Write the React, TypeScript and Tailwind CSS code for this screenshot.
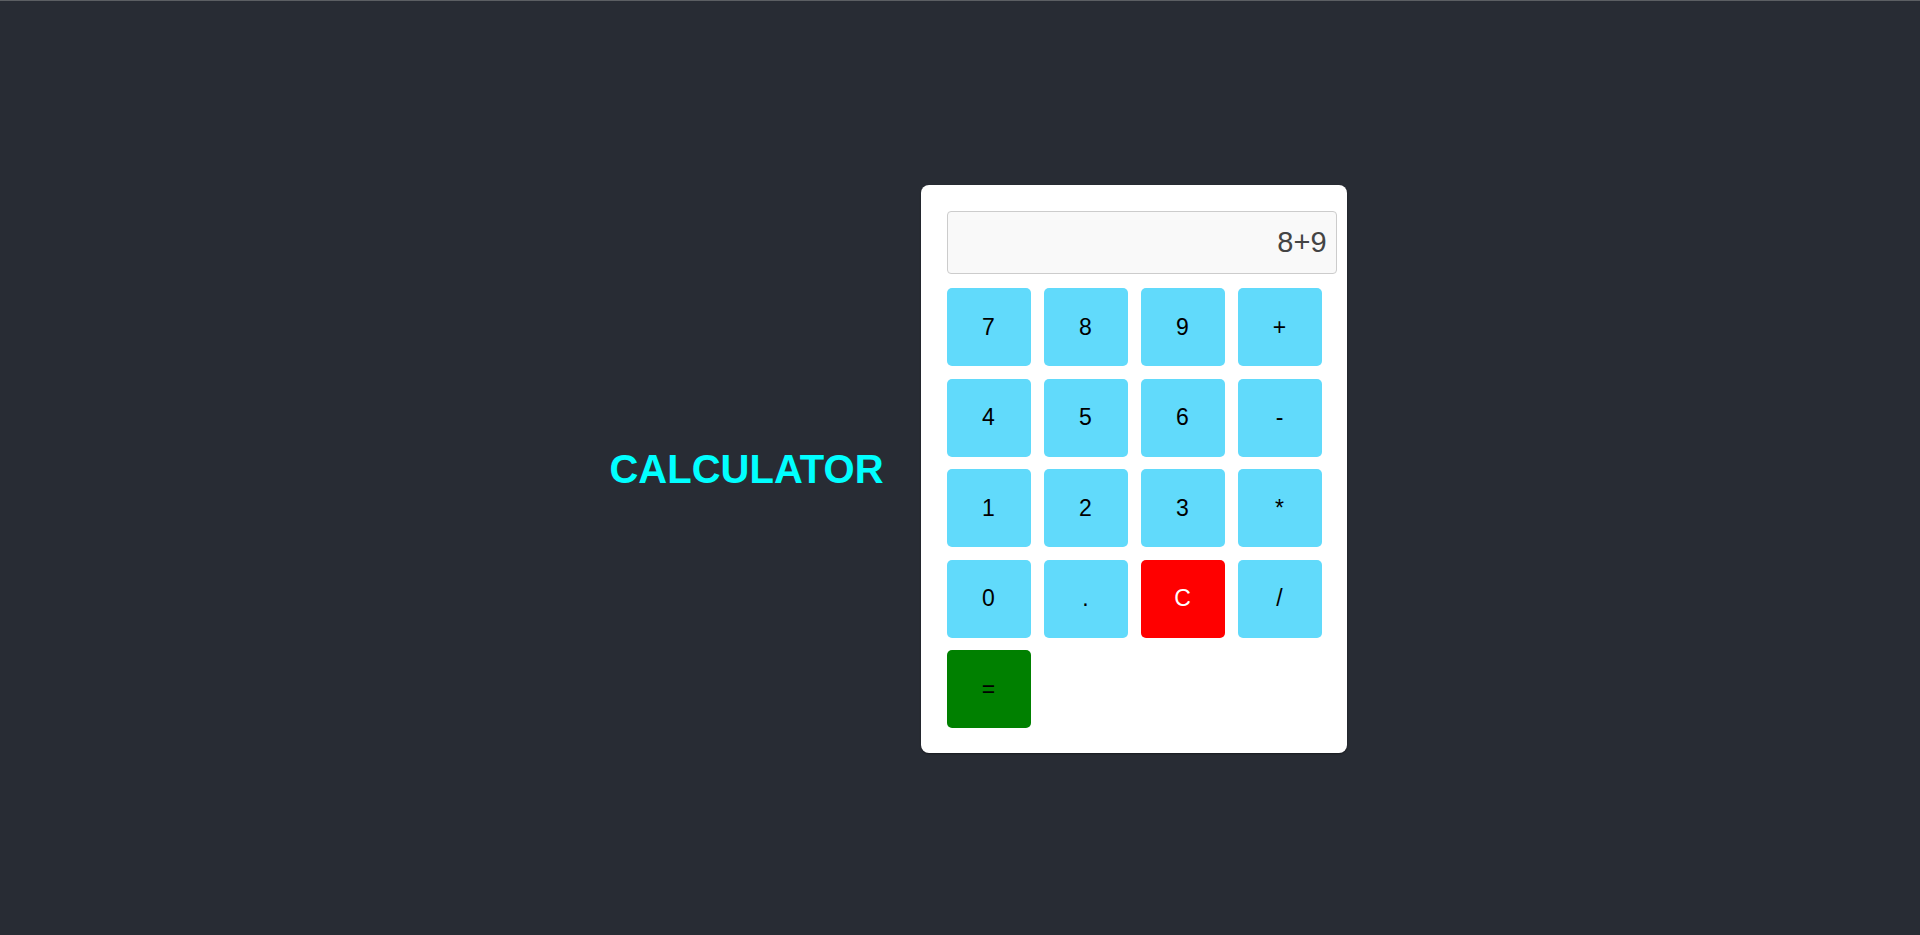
const keys = ["7", "8", "9", "+", "4", "5", "6", "-", "1", "2", "3", "*", "0", ".", "C", "/", "="];

function Key({ label }: { label: string }) {
  let tone = "bg-[#61dafb] text-black";
  if (label === "C") tone = "bg-[#ff0000] text-white";
  if (label === "=") tone = "bg-[#008000] text-black";
  return (
    <button className={`h-[78px] w-[84px] rounded-[5px] text-[23px] leading-none ${tone}`}>
      {label}
    </button>
  );
}

export default function App() {
  return (
    <div className="min-h-screen bg-[#282c34] font-['Liberation_Sans',Arial,sans-serif]">
      <div className="h-px bg-[#5c5f63]" />
      <div className="flex h-[934px] items-center justify-center pl-[36px] pt-[2px]">
        <h1 className="mr-[37px] text-[40px] font-bold text-[#00ffff]">CALCULATOR</h1>
        <div className="w-[426px] rounded-[8px] bg-white pb-[25px] pl-[26px] pr-[10px] pt-[26px] shadow-[0_1px_2px_rgba(0,0,0,0.4)]">
          <div className="flex h-[63px] w-[390px] items-center justify-end rounded-[4px] border border-[#cccccc] bg-[#f9f9f9] pr-[9px] text-[29px] text-[#444444]">
            8+9
          </div>
          <div className="mt-[14px] grid grid-cols-[repeat(4,84px)] gap-x-[13px] gap-y-[12.5px]">
            {keys.map((k) => (
              <Key key={k} label={k} />
            ))}
          </div>
        </div>
      </div>
    </div>
  );
}
